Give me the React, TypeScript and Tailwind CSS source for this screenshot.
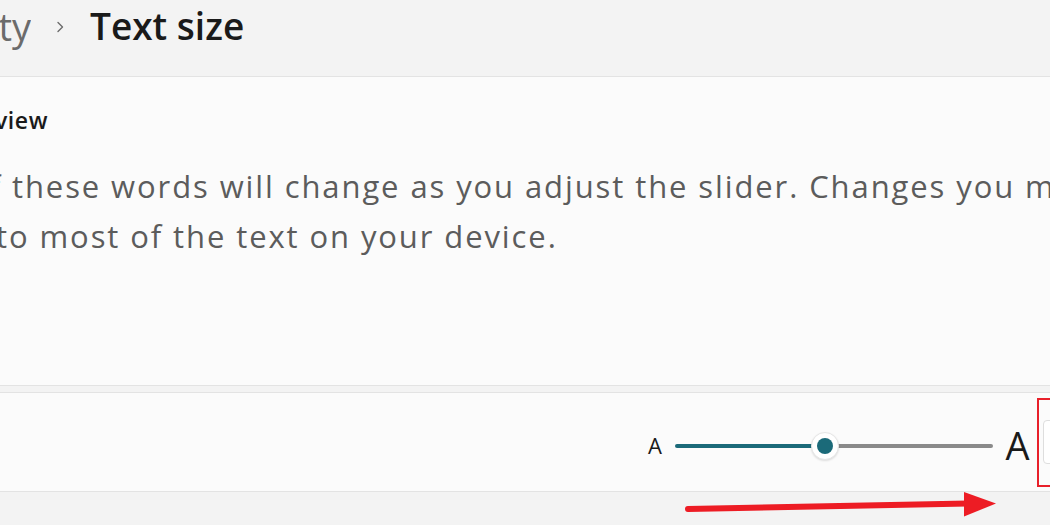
function Clipped({ text, className }: { text: string; className: string }) {
  // shows only the tail of a word cut by the left edge of the window
  return (
    <span className={className}>
      <span className="shrink-0 whitespace-pre">{text}</span>
    </span>
  )
}

function Slider({ value }: { value: number }) {
  return (
    <div className="relative flex h-[28px] w-[318px] shrink-0 items-center">
      <div className="flex h-[4px] w-full overflow-hidden rounded-full">
        <div className="h-full bg-[#1b6a79]" style={{ width: `${value}%` }} />
        <div className="h-full flex-1 bg-[#8a8a8a]" />
      </div>
      <div
        className="absolute top-0 flex h-[28px] w-[28px] -translate-x-1/2 items-center justify-center rounded-full border border-[#e6e6e6] bg-white shadow-[0_1px_2px_rgba(0,0,0,0.12)]"
        style={{ left: `${value}%` }}
      >
        <div className="h-[16px] w-[16px] rounded-full bg-[#1b6a79]" />
      </div>
    </div>
  )
}

export default function App() {
  return (
    <div className="relative h-[525px] w-[1050px] overflow-hidden bg-[#f3f3f3] font-['Open_Sans','Noto_Sans',sans-serif] text-[#1a1a1a]">
      <header className="flex h-[77px] items-start border-b border-[#e3e3e3] pt-[2px]">
        <Clipped
          text="Accessibility"
          className="flex w-[31px] justify-end overflow-hidden text-[38px] leading-[48px] text-[#6b6b6b]"
        />
        <svg className="ml-[24px] mt-[18px]" width="10" height="14" viewBox="0 0 10 14" fill="none">
          <path d="M3 2.5 L7.5 7 L3 11.5" stroke="#6b6b6b" strokeWidth="1.4" strokeLinecap="round" strokeLinejoin="round" />
        </svg>
        <h1 className="ml-[25px] text-[37px] font-semibold leading-[48px]">Text size</h1>
      </header>

      <section className="h-[309px] border-b border-[#e3e3e3] bg-[#fbfbfb] pt-[27px]">
        <Clipped
          text="Preview"
          className="flex w-[48px] justify-end overflow-hidden text-[23px] font-semibold leading-[32px] tracking-[0.6px]"
        />
        <div className="mt-[25px] text-[31px] leading-[50px] tracking-[1.9px] text-[#5c5c5c]">
          <div className="flex whitespace-nowrap">
            <Clipped text="The size of " className="flex w-[12px] shrink-0 justify-end overflow-hidden" />
            <span>these words will change as you adjust the slider. Changes you make here will apply</span>
          </div>
          <div className="flex whitespace-nowrap">
            <Clipped text="apply t" className="flex w-[9px] shrink-0 justify-end overflow-hidden" />
            <span>o most of the text on your device.</span>
          </div>
        </div>
      </section>

      <div className="h-[6px]" />

      <section className="flex h-[100px] items-center border-y border-[#e3e3e3] bg-[#fbfbfb] pl-[646px]">
        <span className="mt-[6px] w-[18px] shrink-0 text-center text-[22px] leading-none">A</span>
        <div className="ml-[11px] mt-[8px] shrink-0">
          <Slider value={47.3} />
        </div>
        <span className="ml-[10px] mt-[6px] w-[29px] shrink-0 text-center text-[38px] leading-none">A</span>
        <div className="ml-[5px] flex h-[89px] w-[120px] shrink-0 items-center border-2 border-[#e8202a] pl-[4px]">
          <div className="h-[44px] w-[100px] rounded-[4px] border border-[#dedede] bg-white" />
        </div>
      </section>

      <svg className="absolute left-0 top-0" width="1050" height="525" viewBox="0 0 1050 525" fill="none">
        <path d="M688 509 L968 503.5" stroke="#ed1c24" strokeWidth="6" strokeLinecap="round" />
        <path d="M964 492 L996 503.5 L964 516.5 Z" fill="#ed1c24" />
      </svg>
    </div>
  )
}
